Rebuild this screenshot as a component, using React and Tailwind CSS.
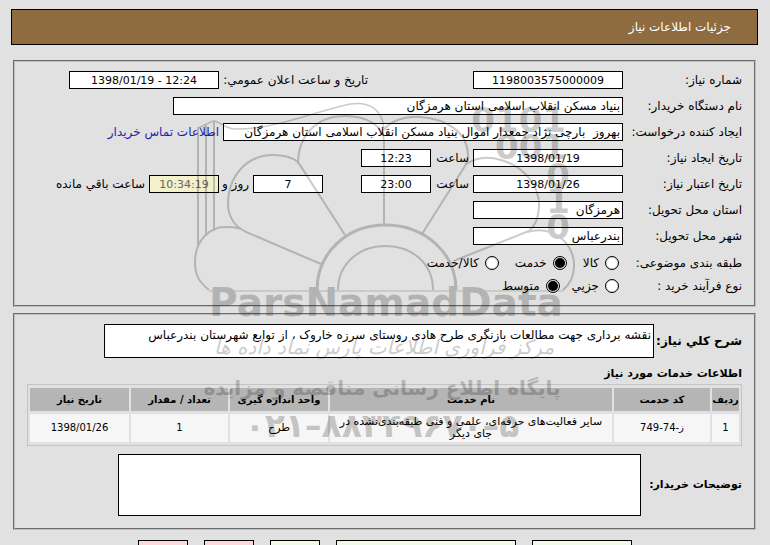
import clsx from 'clsx';

const SERVICES = [
  {
    code: 'ز-74-749',
    name: 'سایر فعالیت‌های حرفه‌ای، علمی و فنی طبقه‌بندی‌نشده در جای دیگر',
    unit: 'طرح',
    count: '1',
    date: '1398/01/26',
  },
];

function Watermark() {
  return (
    <svg
      viewBox="195 95 380 350"
      className="pointer-events-none absolute inset-x-0 top-[95px] mx-auto h-[350px] w-[380px] overflow-visible opacity-20"
      aria-hidden="true"
    >
      <g fill="none" stroke="#000" strokeWidth="2">
        <path d="M198 127V246M206 124V236M214 121V231" />
        <path d="M198 128C206 125 211 121 214 121C220 121 223 128 235 129C272 130 310 113 350 104C370 101 382 110 384 128" strokeWidth="1.5" />
        <path d="M209 290C198 281 195 274 195 262C195 240 210 227 225 227C238 227 242 229 246 232L321 264" />
        <path d="M345 235L298 162C292 157 284 155 273 155C247 155 228 176 228 204C228 214 233 224 241 229" />
        <path d="M298 164C298 134 318 116 345 116C367 116 384 126 384 142V225" />
        <path d="M384 130C390 121 404 116 420 117C448 119 468 133 468 156C468 160 467 163 465 166L422 234" />
        <path d="M465 165C476 157 488 156 501 160C526 167 540 188 539 207C538 218 536 225 529 231L456 260" />
        <path d="M527 232C555 224 575 246 574 266C574 276 570 284 563 290" />
        <path d="M317 290C317 253 347 225 385 225C424 225 456 252 456 290" strokeWidth="3" />
        <path d="M338 290C338 264 359 246 385 246C413 246 433 264 433 290" />
        <path d="M209 291H563" strokeWidth="1" />
      </g>
      <g className="font-['DejaVu_Sans',sans-serif] font-bold" direction="ltr" textAnchor="end" fontSize="34">
        <text x="566" y="132">0101</text>
        <text x="566" y="159">001</text>
        <text x="570" y="188">0</text>
        <text x="570" y="213">1</text>
        <text x="570" y="239">0</text>
      </g>
      <g textAnchor="middle">
        <text x="386" y="316" fontSize="39" direction="ltr" className="font-['DejaVu_Sans',sans-serif] font-bold">ParsNamadData</text>
        <text x="384" y="354" fontSize="20" direction="rtl" className="font-['DejaVu_Sans',sans-serif] italic">مرکز فرآوری اطلاعات پارس نماد داده ها</text>
        <text x="382" y="395" fontSize="20" direction="rtl" className="font-['DejaVu_Sans',sans-serif] font-bold">پایگاه اطلاع رسانی مناقصه و مزایده</text>
        <text x="382" y="437" fontSize="33" direction="ltr" className="font-['DejaVu_Sans',sans-serif] font-bold">۰۲۱–۸۸۳۴۹۶۷۰–۵</text>
      </g>
    </svg>
  );
}

function Field({ id, value, className, dir = 'ltr' }) {
  return (
    <input
      id={id}
      dir={dir}
      readOnly
      defaultValue={value}
      className={clsx(
        'h-[18px] border border-black px-0.5',
        dir === 'ltr' ? 'text-center text-[11px]' : 'text-right text-xs',
        className
      )}
    />
  );
}

function Row({ label, htmlFor, children }) {
  return (
    <div className="flex h-[18px] items-center gap-1">
      <label htmlFor={htmlFor} className="w-[115px] shrink-0 whitespace-nowrap">{label}</label>
      {children}
    </div>
  );
}

function Choice({ name, label, checked }) {
  return (
    <label className="flex items-center gap-[6px] whitespace-nowrap">
      <input
        type="radio"
        name={name}
        defaultChecked={checked}
        className="size-[14px] appearance-none rounded-full border border-black bg-white bg-clip-content p-px checked:bg-black"
      />
      {label}
    </label>
  );
}

function Panel({ children, className }) {
  return (
    <fieldset className={clsx('border-2 border-[#c0c0c0] [border-style:groove] px-3 pt-[9px]', className)}>
      {children}
    </fieldset>
  );
}

export default function App() {
  return (
    <main
      dir="rtl"
      className="relative h-screen overflow-hidden bg-[#e1e1e1] pt-[9px] pr-[14px] pl-[13px] font-['DejaVu_Sans',sans-serif] text-xs leading-4 text-black"
    >
      <header className="-mx-0.5 flex h-9 items-center border border-black bg-[#8f6c40] px-[26px] text-white">
        <h1>جزئیات اطلاعات نیاز</h1>
      </header>

      <Panel className="mt-[15px] pb-[10px]">
        <div className="flex flex-col gap-2">
          <Row label="شماره نیاز:" htmlFor="number">
            <Field id="number" value="1198003575000009" className="w-[150px] bg-white" />
            <label htmlFor="announced" className="mr-[101px] w-[145px] whitespace-nowrap">تاریخ و ساعت اعلان عمومي:</label>
            <Field id="announced" value="1398/01/19 - 12:24" className="w-[150px] bg-white" />
          </Row>
          <Row label="نام دستگاه خریدار:" htmlFor="buyer">
            <Field id="buyer" dir="rtl" value="بنیاد مسکن انقلاب اسلامی استان هرمزگان" className="w-[450px] bg-white" />
          </Row>
          <Row label="ایجاد کننده درخواست:" htmlFor="creator">
            <Field id="creator" dir="rtl" value="بهروز  بارچی نژاد جمعدار اموال بنیاد مسکن انقلاب اسلامی استان هرمزگان" className="w-[400px] bg-white" />
            <a href="#contact" className="whitespace-nowrap text-[#1c1cb0]">اطلاعات تماس خریدار</a>
          </Row>
          <Row label="تاریخ ایجاد نیاز:" htmlFor="created">
            <Field id="created" value="1398/01/19" className="w-[150px] bg-white" />
            <label htmlFor="created-time" className="w-[34px]">ساعت</label>
            <Field id="created-time" value="12:23" className="w-[70px] bg-white" />
          </Row>
          <Row label="تاریخ اعتبار نیاز:" htmlFor="valid">
            <Field id="valid" value="1398/01/26" className="w-[150px] bg-white" />
            <label htmlFor="valid-time" className="w-[34px]">ساعت</label>
            <Field id="valid-time" value="23:00" className="w-[70px] bg-white" />
            <Field id="days" value="7" className="mr-[34px] w-[70px] bg-white" />
            <label htmlFor="days" className="w-[26px] whitespace-nowrap">روز و</label>
            <Field id="remaining" value="10:34:19" className="w-[70px] bg-[#f3f1cb] text-[#666]" />
            <label htmlFor="remaining" className="whitespace-nowrap">ساعت باقي مانده</label>
          </Row>
          <Row label="استان محل تحویل:" htmlFor="province">
            <Field id="province" dir="rtl" value="هرمزگان" className="w-[150px] bg-white" />
          </Row>
          <Row label="شهر محل تحویل:" htmlFor="city">
            <Field id="city" dir="rtl" value="بندرعباس" className="w-[150px] bg-white" />
          </Row>
        </div>
        <div className="mt-[9px] flex flex-col gap-[5px]">
          <div className="flex h-[18px] items-center">
            <span className="w-[123px] whitespace-nowrap">طبقه بندی موضوعی:</span>
            <div className="flex gap-4">
              <Choice name="kind" label="کالا" />
              <Choice name="kind" label="خدمت" checked />
              <Choice name="kind" label="کالا/خدمت" />
            </div>
          </div>
          <div className="flex h-[18px] items-center">
            <span className="w-[123px] whitespace-nowrap">نوع فرآیند خرید :</span>
            <div className="flex gap-3">
              <Choice name="process" label="جزیي" />
              <Choice name="process" label="متوسط" checked />
            </div>
          </div>
        </div>
      </Panel>

      <Panel className="mt-[6px] pb-3">
        <div className="flex items-center gap-1">
          <label htmlFor="summary" className="w-[84px] font-bold whitespace-nowrap">شرح كلي نياز:</label>
          <textarea
            id="summary"
            readOnly
            defaultValue="نقشه برداری جهت مطالعات بازنگری طرح هادی روستای سرزه خاروک ، از توابع شهرستان بندرعباس"
            className="h-[34px] w-[550px] resize-none overflow-hidden border border-black bg-white px-0.5 pt-0.5"
          />
        </div>
        <h2 className="mt-2 mb-0.5 text-[11px] leading-4 font-bold">اطلاعات خدمات مورد نیاز</h2>
        <table className="w-full table-fixed border-separate border-spacing-x-0.5 border-spacing-y-[3px] border border-[#c4c4c4] text-center text-[10px] leading-3">
          <colgroup>
            <col className="w-[27px]" />
            <col className="w-[96px]" />
            <col />
            <col className="w-[98px]" />
            <col className="w-[97px]" />
            <col className="w-[99px]" />
          </colgroup>
          <thead>
            <tr className="h-[23px] bg-[#b5b5b5] whitespace-nowrap">
              <th>ردیف</th>
              <th>کد خدمت</th>
              <th>نام خدمت</th>
              <th>واحد اندازه گیری</th>
              <th>تعداد / مقدار</th>
              <th>تاریخ نیاز</th>
            </tr>
          </thead>
          <tbody>
            {SERVICES.map((s, i) => (
              <tr key={s.code} className="h-7 bg-[#f6f6f6]">
                <td>{i + 1}</td>
                <td>{s.code}</td>
                <td className="px-1 text-[11px] leading-3">{s.name}</td>
                <td className="text-[11px]">{s.unit}</td>
                <td>{s.count}</td>
                <td>{s.date}</td>
              </tr>
            ))}
          </tbody>
        </table>
        <div className="mt-2 flex items-center gap-1">
          <label htmlFor="notes" className="w-[97px] text-[11px] font-bold whitespace-nowrap">توضیحات خریدار:</label>
          <textarea id="notes" readOnly className="h-[62px] w-[523px] resize-none border border-black bg-white" />
        </div>
      </Panel>

      <div className="mt-[10px] flex gap-4 pr-[124px]">
        <button type="button" className="h-6 w-[100px] border border-black bg-[#eefbe6]" />
        <button type="button" className="h-6 w-[180px] border border-black bg-[#eefbe6]" />
        <button type="button" className="h-6 w-[50px] border border-black bg-[#eefbe6]" />
        <button type="button" className="h-6 w-[50px] border border-black bg-[#ffd9d9]" />
        <button type="button" className="h-6 w-[50px] border border-black bg-[#ffd9d9]" />
      </div>

      <Watermark />
    </main>
  );
}
